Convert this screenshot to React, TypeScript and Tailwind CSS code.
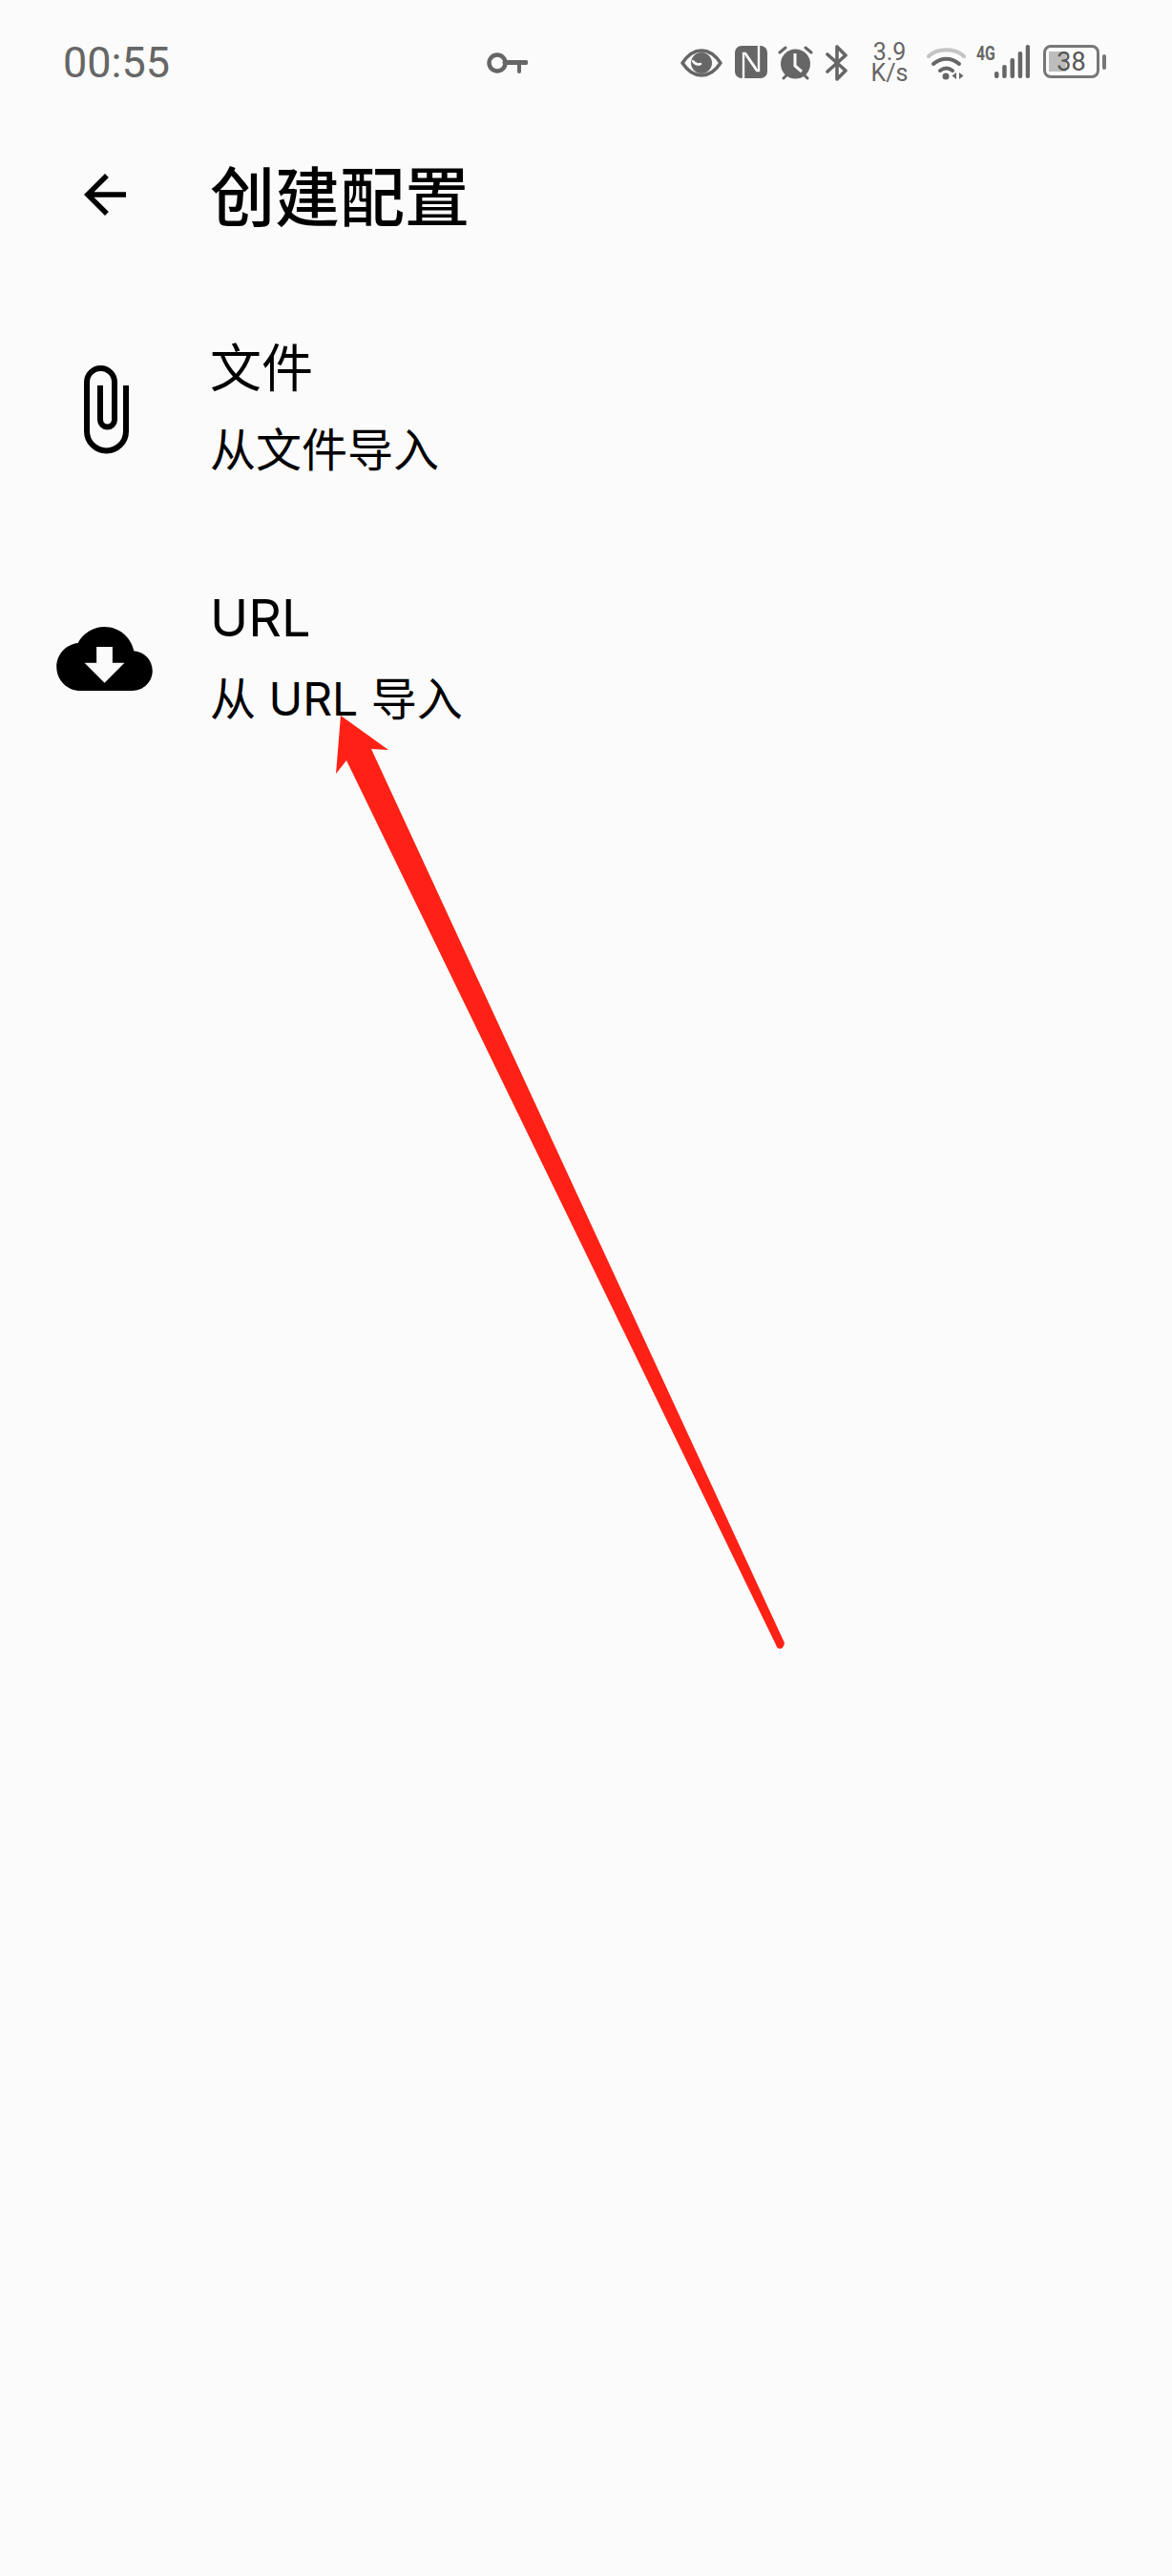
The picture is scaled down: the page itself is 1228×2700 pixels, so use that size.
import React from 'react';

const statusGray = '#666666';

const KeyIcon = () => (
  <svg width="43" height="22" viewBox="0 0 43 22" fill="none" stroke={statusGray}>
    <circle cx="11" cy="11" r="8.5" strokeWidth="4.5" />
    <path d="M19 10.500H41" strokeWidth="5" strokeLinecap="round" />
    <path d="M34 11V20" strokeWidth="4" strokeLinecap="round" />
  </svg>
);

const EyeIcon = () => (
  <svg width="44" height="30" viewBox="0 0 44 30">
    <path d="M2 15C8 6 14 2 22 2s14 4 20 13c-6 9-12 13-20 13S8 24 2 15z" fill="none" stroke={statusGray} strokeWidth="3.5" strokeLinejoin="round" />
    <circle cx="22" cy="15" r="11" fill={statusGray} />
    <path d="M13 13c2 3 5 4 8 3" fill="none" stroke="#fbfbfb" strokeWidth="2.5" strokeLinecap="round" />
  </svg>
);

const NfcIcon = () => (
  <svg width="34" height="34" viewBox="0 0 34 34">
    <rect x="0" y="0" width="34" height="34" rx="7" fill={statusGray} />
    <path d="M9 34V8h2l11 16" fill="none" stroke="#fbfbfb" strokeWidth="2.4" />
    <path d="M25 0V26h-2L12 10" fill="none" stroke="#fbfbfb" strokeWidth="2.4" />
  </svg>
);

const AlarmIcon = () => (
  <svg width="37" height="36" viewBox="0 0 37 36">
    <circle cx="18.500" cy="19" r="15.500" fill={statusGray} />
    <path d="M2 7l6-5M35 7l-6-5M6 34l3-3M31 34l-3-3" stroke={statusGray} strokeWidth="3" strokeLinecap="round" />
    <path d="M18 8V21l7 6" fill="none" stroke="#fbfbfb" strokeWidth="3" />
  </svg>
);

const BluetoothIcon = () => (
  <svg width="24" height="38" viewBox="0 0 24 38" fill="none" stroke={statusGray} strokeWidth="3.6" strokeLinejoin="round" strokeLinecap="round">
    <path d="M2 28L21 11 12 2v34l9-9L2 10" />
  </svg>
);

const WifiIcon = () => (
  <svg width="42" height="36" viewBox="0 0 42 36" fill="none" strokeLinecap="round">
    <path d="M2 11C11 2 30 2 39 11" stroke="#c4c4c4" strokeWidth="4" />
    <path d="M7 19c8-7 19-7 27 0" stroke={statusGray} strokeWidth="4" />
    <path d="M14 26c4-3 9-3 13 0" stroke={statusGray} strokeWidth="4" />
    <circle cx="20" cy="32" r="3.500" fill={statusGray} />
    <path d="M31 28v7l-4.500-3.500zM34 28v7l4.500-3.500z" fill={statusGray} />
  </svg>
);

const SignalIcon = () => (
  <svg width="37" height="35" viewBox="0 0 37 35" fill={statusGray}>
    <rect x="0" y="28" width="4.500" height="7" rx="2" />
    <rect x="8.200" y="21" width="4.500" height="14" rx="2" />
    <rect x="16.500" y="14" width="4.500" height="21" rx="2" />
    <rect x="24.700" y="7" width="4.500" height="28" rx="2" />
    <rect x="32.700" y="0" width="4.300" height="35" rx="2" />
  </svg>
);

const ArrowBack = () => (
  <svg width="66" height="66" viewBox="0 0 24 24" fill="#000000">
    <path d="M20 11H7.830l5.590-5.590L12 4l-8 8 8 8 1.410-1.410L7.830 13H20v-2z" />
  </svg>
);

const PaperclipIcon = () => (
  <svg className="ml-[3px]" width="47" height="93" viewBox="0 0 47 93" fill="none" stroke="#000000" strokeWidth="6">
    <path d="M17 21V57a7.500 7.500 0 0 0 15 0V17.500a14.500 14.500 0 0 0-29 0V69a20.500 20.500 0 0 0 41 0V21" />
  </svg>
);

const CloudDownload = () => (
  <svg className="-ml-[1px]" width="101" height="67" viewBox="0 4 24 16" fill="#000000">
    <path fillRule="evenodd" d="M19.350 10.040C18.670 6.590 15.640 4 12 4 9.110 4 6.600 5.640 5.350 8.040 2.340 8.360 0 10.910 0 14c0 3.310 2.690 6 6 6h13c2.760 0 5-2.240 5-5 0-2.640-2.050-4.780-4.650-4.960zM17 13l-5 5-5-5h3V9h4v4h3z" />
  </svg>
);

const ImportRow = ({ icon, title, subtitle }: { icon: React.ReactNode; title: string; subtitle: string }) => (
  <div className="flex items-center h-[160px]">
    <div className="w-[220px] flex justify-center shrink-0">{icon}</div>
    <div className="flex flex-col gap-[5px] text-black font-['Inter','Noto_Sans_CJK_SC',sans-serif]">
      <div className="text-[54px] leading-[80px]">{title}</div>
      <div className="text-[48px] leading-[80px]">{subtitle}</div>
    </div>
  </div>
);

export default function App() {
  return (
    <div className="relative w-[1228px] h-[2700px] overflow-hidden bg-[#fbfbfb] font-['Noto_Sans_CJK_SC','Noto_Sans',sans-serif]">
      <div className="flex items-center h-[44px] mt-[44px] pl-[66px] text-[#666666]">
        <span className="w-[108px] text-[45px] leading-[44px] font-['Roboto',sans-serif]">00:55</span>
        <div className="ml-[336px] w-[203px]"><KeyIcon /></div>
        <EyeIcon />
        <div className="ml-[13px] -mt-[3px]"><NfcIcon /></div>
        <div className="ml-[11px]"><AlarmIcon /></div>
        <div className="ml-[13px]"><BluetoothIcon /></div>
        <div className="ml-[22px] w-[42px] flex flex-col items-center text-[25px] leading-[22px] font-['Roboto',sans-serif]">
          <span>3.9</span>
          <span>K/s</span>
        </div>
        <div className="ml-[18px]"><WifiIcon /></div>
        <div className="ml-[10px] w-[19px] self-start mt-[2px]">
          <span className="block origin-left scale-x-75 text-[21px] leading-[20px] font-bold font-['Roboto',sans-serif]">4G</span>
        </div>
        <div className="-mt-[3px]"><SignalIcon /></div>
        <div className="ml-[14px] -mt-[3px] relative flex items-center justify-center w-[59px] h-[35px] border-[3px] border-[#777777] rounded-[8px]">
          <div className="absolute left-[3px] top-[4px] w-[18px] h-[21px] bg-[#bdbdbd]" />
          <span className="relative text-[27px] leading-[28px] text-[#555555] font-['Roboto',sans-serif]">38</span>
        </div>
        <div className="ml-[3px] -mt-[2px] w-[4px] h-[16px] rounded-full bg-[#777777]" />
      </div>

      <div className="flex items-center h-[80px] mt-[75px]">
        <div className="w-[220px] flex justify-center shrink-0 mt-[1px]"><ArrowBack /></div>
        <h1 className="text-[68px] leading-[80px] font-medium text-black">创建配置</h1>
      </div>

      <div className="mt-[106px] flex flex-col gap-[101px]">
        <ImportRow icon={<PaperclipIcon />} title="文件" subtitle="从文件导入" />
        <ImportRow icon={<CloudDownload />} title="URL" subtitle="从 URL 导入" />
      </div>

      {/* red annotation arrow drawn over the screenshot */}
      <svg className="absolute left-0 top-0 pointer-events-none" width="1228" height="2700" viewBox="0 0 1228 2700">
        <path d="M357 750L407 786 389 785 822 1722Q821 1728 817 1728 814 1728 813 1724L363 797 352 811z" fill="#ff2115" />
      </svg>
    </div>
  );
}
